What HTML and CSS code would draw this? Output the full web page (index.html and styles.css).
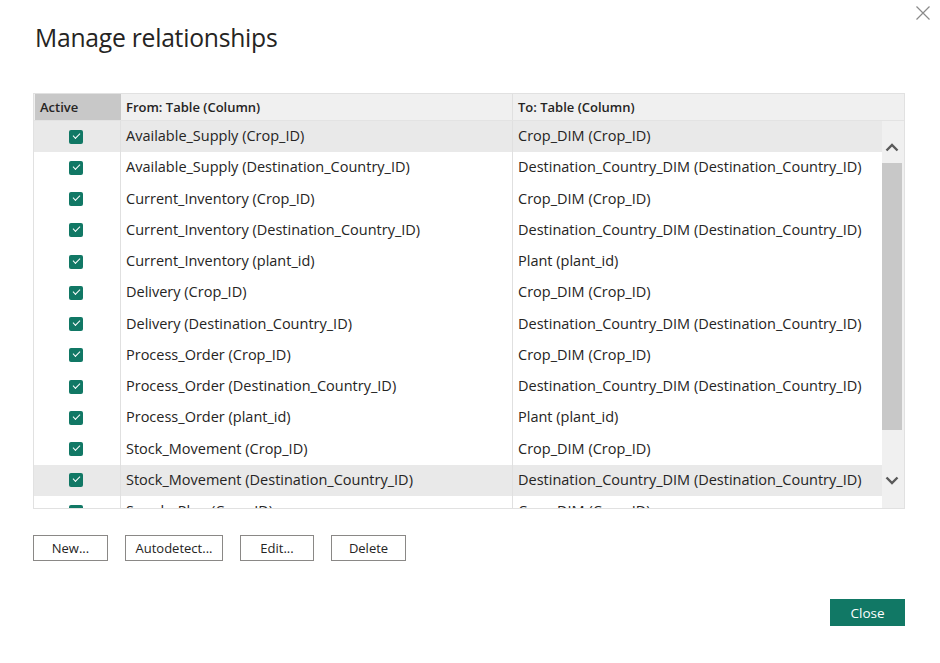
FILE: index.html
```html
<!DOCTYPE html>
<html>
<head>
<meta charset="utf-8">
<link rel="stylesheet" href="styles.css">
</head>
<body>
<div class="dialog">
  <button class="x-btn" aria-label="Close">
    <svg width="16" height="16" viewBox="0 0 16 16"><path d="M1.5 1.5 L14.5 14.5 M14.5 1.5 L1.5 14.5" stroke="#8a8a8a" stroke-width="1.2" fill="none"/></svg>
  </button>
  <h1 class="title">Manage relationships</h1>

  <div class="grid">
    <div class="head">
      <div class="hcell h-active">Active</div>
      <div class="hcell h-from">From: Table (Column)</div>
      <div class="hcell h-to">To: Table (Column)</div>
    </div>
    <div class="body">
      <div class="rows">
        <div class="row sel"><div class="c-active"><span class="chk"></span></div><div class="c-from">Available_Supply (Crop_ID)</div><div class="c-to">Crop_DIM (Crop_ID)</div></div>
        <div class="row"><div class="c-active"><span class="chk"></span></div><div class="c-from">Available_Supply (Destination_Country_ID)</div><div class="c-to">Destination_Country_DIM (Destination_Country_ID)</div></div>
        <div class="row"><div class="c-active"><span class="chk"></span></div><div class="c-from">Current_Inventory (Crop_ID)</div><div class="c-to">Crop_DIM (Crop_ID)</div></div>
        <div class="row"><div class="c-active"><span class="chk"></span></div><div class="c-from">Current_Inventory (Destination_Country_ID)</div><div class="c-to">Destination_Country_DIM (Destination_Country_ID)</div></div>
        <div class="row"><div class="c-active"><span class="chk"></span></div><div class="c-from">Current_Inventory (plant_id)</div><div class="c-to">Plant (plant_id)</div></div>
        <div class="row"><div class="c-active"><span class="chk"></span></div><div class="c-from">Delivery (Crop_ID)</div><div class="c-to">Crop_DIM (Crop_ID)</div></div>
        <div class="row"><div class="c-active"><span class="chk"></span></div><div class="c-from">Delivery (Destination_Country_ID)</div><div class="c-to">Destination_Country_DIM (Destination_Country_ID)</div></div>
        <div class="row"><div class="c-active"><span class="chk"></span></div><div class="c-from">Process_Order (Crop_ID)</div><div class="c-to">Crop_DIM (Crop_ID)</div></div>
        <div class="row"><div class="c-active"><span class="chk"></span></div><div class="c-from">Process_Order (Destination_Country_ID)</div><div class="c-to">Destination_Country_DIM (Destination_Country_ID)</div></div>
        <div class="row"><div class="c-active"><span class="chk"></span></div><div class="c-from">Process_Order (plant_id)</div><div class="c-to">Plant (plant_id)</div></div>
        <div class="row"><div class="c-active"><span class="chk"></span></div><div class="c-from">Stock_Movement (Crop_ID)</div><div class="c-to">Crop_DIM (Crop_ID)</div></div>
        <div class="row sel"><div class="c-active"><span class="chk"></span></div><div class="c-from">Stock_Movement (Destination_Country_ID)</div><div class="c-to">Destination_Country_DIM (Destination_Country_ID)</div></div>
        <div class="row"><div class="c-active"><span class="chk"></span></div><div class="c-from">Supply_Plan (Crop_ID)</div><div class="c-to">Crop_DIM (Crop_ID)</div></div>
      </div>
      <div class="scrollbar">
        <div class="arrow arrow-up">
          <svg width="14" height="9" viewBox="0 0 14 9"><path d="M1.5 7.5 L7 2 L12.5 7.5" stroke="#5a5a5a" stroke-width="2.4" fill="none"/></svg>
        </div>
        <div class="track"><div class="thumb"></div></div>
        <div class="arrow arrow-down">
          <svg width="14" height="9" viewBox="0 0 14 9"><path d="M1.5 1.5 L7 7 L12.5 1.5" stroke="#5a5a5a" stroke-width="2.4" fill="none"/></svg>
        </div>
      </div>
    </div>
  </div>

  <div class="actions">
    <button class="btn b-new">New...</button>
    <button class="btn b-auto">Autodetect...</button>
    <button class="btn b-edit">Edit...</button>
    <button class="btn b-del">Delete</button>
  </div>

  <div class="footer">
    <button class="primary">Close</button>
  </div>
</div>
</body>
</html>
```

FILE: styles.css
```css
* { box-sizing: border-box; }
html, body { margin: 0; padding: 0; background: #ffffff; }
body {
  width: 940px;
  height: 663px;
  overflow: hidden;
  font-family: "Open Sans", "Noto Sans", sans-serif;
  color: #252423;
}
.dialog {
  position: relative;
  width: 940px;
  height: 663px;
  padding: 0 35px 0 33px;
}
.x-btn {
  position: absolute;
  top: 5px;
  right: 9px;
  width: 16px;
  height: 16px;
  padding: 0;
  border: 0;
  background: none;
  display: flex;
}
.title {
  margin: 0;
  padding: 21px 0 0 2px;
  height: 93px;
  font-size: 24.7px;
  font-weight: 400;
  line-height: 33px;
  color: #252423;
  letter-spacing: -0.25px;
}
.grid {
  width: 872px;
  height: 416px;
  border: 1px solid #e1e1e1;
  display: flex;
  flex-direction: column;
  overflow: hidden;
}
.head {
  display: flex;
  height: 27px;
  background: #f0f0f0;
  border-bottom: 1px solid #e3e3e3;
  flex: none;
}
.hcell {
  font-size: 13px;
  font-weight: 600;
  line-height: 26px;
  padding-left: 5px;
  color: #252423;
}
.h-active {
  width: 86px;
  background: #c8c8c8;
  margin-left: 1px;
}
.h-from {
  width: 392px;
  border-right: 1px solid #e0e0e0;
}
.h-to { flex: 1; }
.body {
  display: flex;
  flex: 1;
  overflow: hidden;
}
.rows {
  flex: 1;
  overflow: hidden;
}
.row {
  display: flex;
  height: 31.25px;
  align-items: center;
  font-size: 14.5px;
  line-height: 18px;
  color: #252423;
}
.row.sel { background: #e9e9e9; }
.c-active {
  width: 87px;
  height: 100%;
  display: flex;
  align-items: center;
  justify-content: center;
  border-right: 1px solid #e0e0e0;
}
.chk {
  width: 14px;
  height: 14px;
  border-radius: 2px;
  background: #117865;
  position: relative;
  margin-right: 3px;
}
.chk::after {
  content: "";
  position: absolute;
  left: 4px;
  top: 3px;
  width: 6px;
  height: 3px;
  border-left: 1.6px solid #ffffff;
  border-bottom: 1.6px solid #ffffff;
  transform: rotate(-45deg);
}
.c-from {
  width: 392px;
  height: 100%;
  padding-left: 5px;
  padding-bottom: 1px;
  display: flex;
  align-items: center;
  border-right: 1px solid #e0e0e0;
  white-space: nowrap;
  overflow: hidden;
}
.c-to {
  flex: 1;
  height: 100%;
  padding-left: 5px;
  padding-bottom: 1px;
  display: flex;
  align-items: center;
  white-space: nowrap;
  overflow: hidden;
}
.scrollbar {
  width: 22px;
  flex: none;
  background: #f0f0f0;
  display: flex;
  flex-direction: column;
  padding-right: 2px;
}
.arrow {
  height: 42px;
  display: flex;
  justify-content: center;
}
.arrow-up {
  align-items: flex-end;
  padding-bottom: 11px;
}
.arrow-down {
  align-items: flex-start;
  padding-top: 10px;
}
.track {
  flex: 1;
  position: relative;
}
.thumb {
  height: 267px;
  background: #c8c8c8;
}
.actions {
  display: flex;
  gap: 17px;
  margin-top: 26px;
}
.btn {
  height: 26px;
  border: 1px solid #8a8886;
  background: #ffffff;
  font-family: "Open Sans", "Noto Sans", sans-serif;
  font-size: 13px;
  color: #252423;
  padding: 0;
}
.b-new { width: 75px; }
.b-auto { width: 98px; }
.b-edit { width: 74px; }
.b-del { width: 75px; }
.footer {
  display: flex;
  justify-content: flex-end;
  margin-top: 38px;
}
.primary {
  width: 75px;
  height: 27px;
  border: 0;
  background: #117865;
  color: #ffffff;
  font-family: "Open Sans", "Noto Sans", sans-serif;
  font-size: 13.5px;
  padding: 0;
}
```
